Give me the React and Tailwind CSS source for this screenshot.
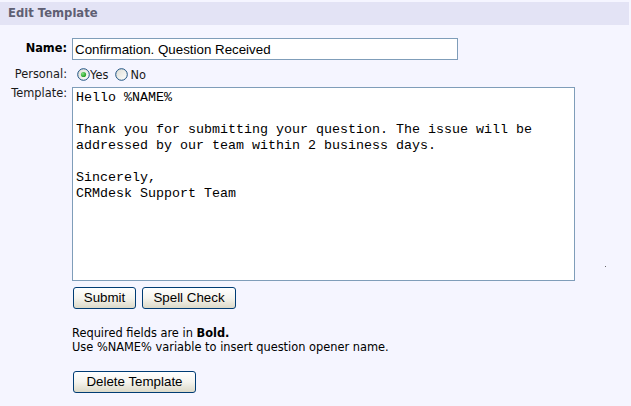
import React from "react";

const verdana = { fontFamily: '"DejaVu Sans", Verdana, sans-serif' };

function Radio({ checked }) {
  return (
    <svg width="13" height="13" viewBox="0 0 13 13" className="shrink-0">
      <defs>
        <linearGradient id={checked ? "rg1" : "rg2"} x1="0" y1="0" x2="1" y2="1">
          <stop offset="0" stopColor="#dcdcd4" />
          <stop offset="1" stopColor="#ffffff" />
        </linearGradient>
        <radialGradient id="dotg" cx="0.35" cy="0.35" r="0.7">
          <stop offset="0" stopColor="#7ee07e" />
          <stop offset="1" stopColor="#1f9a1f" />
        </radialGradient>
      </defs>
      <circle cx="6.5" cy="6.5" r="5.8" fill={`url(#${checked ? "rg1" : "rg2"})`} stroke="#1c5180" strokeWidth="1" />
      {checked && <circle cx="6.5" cy="6.5" r="2.6" fill="url(#dotg)" />}
    </svg>
  );
}

function XPButton({ children, w }) {
  return (
    <button
      className={`h-[22px] ${w} rounded-[3px] border border-[#003c74] bg-gradient-to-b from-[#ffffff] via-[#f5f4ee] to-[#dcd9c8] text-[13.33px] text-black leading-none flex items-center justify-center`}
      style={{ fontFamily: '"Liberation Sans", Arial, sans-serif' }}
    >
      {children}
    </button>
  );
}

export default function App() {
  const text =
    "Hello %NAME%\n\nThank you for submitting your question. The issue will be\naddressed by our team within 2 business days.\n\nSincerely,\nCRMdesk Support Team";
  return (
    <div className="relative w-[631px] h-[406px] overflow-hidden bg-[#f5f5ff] pt-[2px]" style={verdana}>
      <div className="h-[23px] w-[629px] bg-[#e3e3f5] pl-[8px] flex items-center text-[11.6px] font-bold text-[#5f5f73]">
        Edit Template
      </div>

      <div className="pt-[13px] grid grid-cols-[67px_1fr] gap-x-[5px] text-[11.4px] text-[#1a1a1a]">
        {/* Name */}
        <div className="h-[22px] flex items-center justify-end font-bold text-black">Name:</div>
        <div>
          <input
            type="text"
            defaultValue="Confirmation. Question Received"
            className="block w-[386px] h-[22px] border border-[#7f9db9] bg-white px-[2px] text-[13.33px] text-black outline-none"
            style={{ fontFamily: '"Liberation Sans", Arial, sans-serif' }}
          />
        </div>

        {/* Personal */}
        <div className="h-[27px] flex items-center justify-end pt-[2px]">Personal:</div>
        <div className="h-[27px] flex items-center pt-[1px]">
          <div className="ml-[5px] flex items-center">
            <Radio checked />
            <span className="leading-[13px] pt-[2px]">Yes</span>
          </div>
          <div className="ml-[7px] flex items-center">
            <Radio />
            <span className="ml-[2px] leading-[13px] pt-[2px]">No</span>
          </div>
        </div>

        {/* Template */}
        <div className="text-right leading-[14px] -mt-[1px]">Template:</div>
        <div>
          <textarea
            defaultValue={text}
            className="block w-[503px] h-[194px] border border-[#7f9db9] bg-white pl-[3px] pt-[2px] text-[13.33px] leading-[16px] text-black resize-none overflow-hidden outline-none"
            style={{ fontFamily: '"Liberation Mono", "Courier New", monospace' }}
          />
          <div className="mt-[6px] ml-[1px] flex gap-[6px]">
            <XPButton w="w-[63px]">Submit</XPButton>
            <XPButton w="w-[94px]">Spell Check</XPButton>
          </div>
          <div className="mt-[17px] leading-[14px] text-black">
            <div>
              Required fields are in <span className="font-bold">Bold.</span>
            </div>
            <div>Use %NAME% variable to insert question opener name.</div>
          </div>
          <div className="mt-[17px] ml-[1px] flex">
            <XPButton w="w-[123px]">Delete Template</XPButton>
          </div>
        </div>
      </div>

      <div className="absolute left-[605px] top-[266px] w-[1px] h-[1px] bg-[#666]" />
    </div>
  );
}
